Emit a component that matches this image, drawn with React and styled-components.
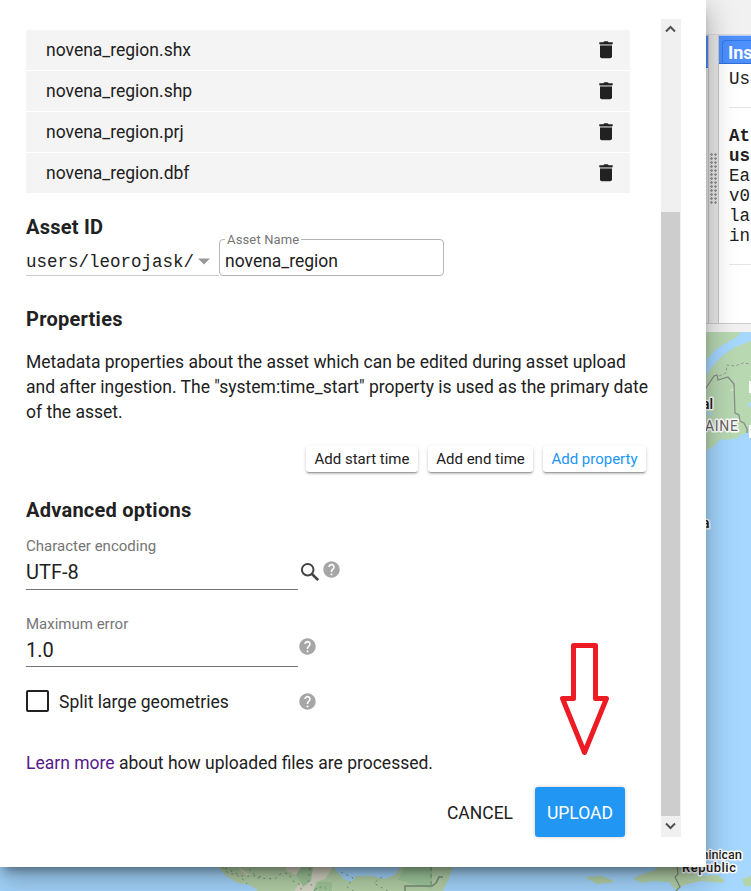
import React from "react";
import styled, { createGlobalStyle } from "styled-components";

const GlobalStyle = createGlobalStyle`
  * { box-sizing: border-box; }
  body { margin: 0; overflow: hidden; font-family: Roboto, sans-serif; color: #212121; }
`;

const Page = styled.div`
  position: relative;
  width: 751px;
  height: 891px;
  overflow: hidden;
  background: #f1f1f1;
`;

/* Workspace behind the dialog */
const Workspace = styled.div`
  display: flex;
  flex-direction: column;
  height: 100%;
`;
const TopBar = styled.div`
  height: 35px;
  flex: none;
  border-bottom: 1px solid #dcdcdc;
`;
const Panels = styled.div`
  display: flex;
  height: 289px;
  flex: none;
  border-bottom: 1px solid #ccc;
`;
const CodePanel = styled.div`
  width: 709px;
  flex: none;
  background: #ececec;
  border-right: 1px solid #c8c8c8;
`;
const PanelHeader = styled.div`
  height: ${(p) => p.$height}px;
  padding: 4px 0 0 3px;
  background: #4d90fe;
  border-top: 1px solid #b9cdf0;
  border-bottom: 1px solid #2f6fd8;
`;
const Tab = styled.div`
  height: 24px;
  width: 60px;
  padding-left: 5px;
  border: 1px solid #3079ed;
  border-bottom: 0;
  border-radius: 4px 0 0 0;
  color: #fff;
  font-size: 18px;
  font-weight: 700;
  line-height: 24px;
`;
const Splitter = styled.div`
  display: flex;
  align-items: center;
  justify-content: center;
  width: 9px;
  flex: none;
  background: #e9e9e9;
`;
const Grip = styled.div`
  width: 7px;
  height: 52px;
  background: radial-gradient(circle at 1.5px 1.5px, #999 1.1px, transparent 1.5px) 0 0 / 4px 4px;
`;
const Inspector = styled.div`
  flex: 1;
  min-width: 0;
  overflow: hidden;
  background: #fff;
  border-left: 1px solid #c8c8c8;
`;
const ConsoleEntry = styled.div`
  width: 120px;
  height: ${(p) => p.$height}px;
  margin-left: 10px;
  padding-top: ${(p) => p.$top}px;
  border-bottom: 1px solid #e5e5e5;
  font: 17.5px/20px "Liberation Mono", monospace;
`;
const MapPane = styled.div`
  flex: 1;
  margin-top: 8px;
  svg { display: block; }
`;

/* Dialog */
const Dialog = styled.div`
  position: absolute;
  left: 0;
  top: 0;
  display: flex;
  width: 706px;
  height: 867px;
  background: #fff;
  box-shadow: 0 16px 24px 2px rgba(0, 0, 0, 0.14), 0 6px 30px 5px rgba(0, 0, 0, 0.12),
    0 8px 10px -5px rgba(0, 0, 0, 0.4);
`;
const Body = styled.div`
  display: flex;
  flex-direction: column;
  width: 661px;
  padding: 30px 0 0 26px;
`;
const FileList = styled.div`
  display: grid;
  grid-auto-rows: 40px;
  gap: 1px;
  width: 604px;
`;
const FileRow = styled.div`
  display: flex;
  align-items: center;
  justify-content: space-between;
  padding: 0 12px 1px 20px;
  background: #f4f4f4;
  font-size: 17.5px;
`;
const Heading = styled.h3`
  margin: ${(p) => p.$top}px 0 0;
  font-size: 20px;
  font-weight: 700;
  line-height: 24px;
  letter-spacing: 0.25px;
`;
const AssetRow = styled.div`
  display: flex;
  height: 37px;
`;
const OwnerSelect = styled.div`
  display: flex;
  align-items: center;
  gap: 3px;
  width: 193px;
  padding-top: 9px;
  border-bottom: 1px solid #ccc;
  font: 17.5px/22px "Liberation Mono", monospace;
`;
const AssetField = styled.fieldset`
  width: 225px;
  height: 44px;
  margin: -7px 0 0;
  padding: 5px 5px 0;
  border: 1px solid #b5b5b5;
  border-radius: 4px;
  font-size: 17.5px;
  line-height: 21px;
`;
const Legend = styled.legend`
  height: 14px;
  padding: 0 2px;
  color: #757575;
  font-size: 13px;
  line-height: 15px;
  letter-spacing: 0.15px;
`;
const Copy = styled.p`
  margin: ${(p) => p.$top}px 0 0;
  font-size: 17.5px;
  line-height: 25px;
  white-space: nowrap;
`;
const LearnLink = styled.a`
  color: #551a8b;
`;
const PropertyActions = styled.div`
  display: flex;
  justify-content: flex-end;
  gap: 10px;
  margin: 21px 15px 0 0;
`;
const SmallButton = styled.button`
  width: ${(p) => p.$width}px;
  height: 26px;
  padding: 0;
  border: 0;
  border-radius: 3px;
  background: #fff;
  color: ${(p) => (p.$accent ? "#2196f3" : "#212121")};
  font: 15px/26px Roboto, sans-serif;
  white-space: nowrap;
  box-shadow: 0 2px 2px rgba(0, 0, 0, 0.16), 0 1px 4px rgba(0, 0, 0, 0.12),
    0 2px 1px -1px rgba(0, 0, 0, 0.22);
`;
const FieldRow = styled.div`
  display: flex;
  margin-top: ${(p) => p.$top}px;
`;
const TextField = styled.div`
  width: 272px;
  height: ${(p) => p.$height}px;
  border-bottom: 1px solid #737373;
`;
const FieldLabel = styled.div`
  color: #757575;
  font-size: 15px;
  line-height: 18px;
`;
const FieldValue = styled.div`
  padding-top: 5px;
  font-size: 20px;
  line-height: 25px;
`;
const FieldIcons = styled.div`
  display: flex;
  align-items: flex-start;
  gap: 3px;
  padding: ${(p) => p.$top}px 0 0 ${(p) => p.$left}px;
`;
const CheckRow = styled.div`
  display: flex;
  align-items: center;
  height: 23px;
  margin-top: 23px;
  font-size: 17.5px;
`;
const CheckBox = styled.span`
  width: 23px;
  height: 22px;
  margin: -1px 10px 0 0;
  border: 2px solid #212121;
  border-radius: 2px;
`;
const CheckLabel = styled.span`
  width: 240px;
`;
const Footer = styled.div`
  display: flex;
  justify-content: flex-end;
  gap: 10px;
  margin: 11px 36px 0 0;
`;
const DialogButton = styled.button`
  width: 90px;
  height: 50px;
  padding: 2px 0 0;
  border: 0;
  border-radius: 3px;
  background: ${(p) => (p.$primary ? "#2196f3" : "transparent")};
  color: ${(p) => (p.$primary ? "#fff" : "#212121")};
  font: 17.5px/48px Roboto, sans-serif;
  box-shadow: ${(p) => (p.$primary ? "0 0 4px rgba(0,0,0,0.2)" : "none")};
`;
const ScrollTrack = styled.div`
  display: flex;
  flex-direction: column;
  align-items: flex-start;
  width: 20px;
  height: 818px;
  margin-top: 19px;
  background: #f0f0f0;
`;
const ScrollThumb = styled.div`
  width: 19px;
  height: 604px;
  margin-top: auto;
  background: #cdcdcd;
`;
const ScrollButton = styled.div`
  display: flex;
  align-items: center;
  justify-content: center;
  width: 19px;
  height: 21px;
  padding-bottom: 1px;
`;
const Pointer = styled.svg`
  position: absolute;
  left: 560px;
  top: 643px;
`;

const Trash = () => (
  <svg width="24" height="24" viewBox="0 0 24 24">
    <path d="M6 7.5h12v10.7q0 2-2 2H8q-2 0-2-2z" fill="#212121" />
    <path d="M5.3 4.2h4l1-1h3.4l1 1h4v2H5.3z" fill="#212121" />
    <path d="M6 6.3h12v1.4H6z" fill="#777" />
  </svg>
);
const Help = () => (
  <svg width="18" height="18" viewBox="1.6 1.6 22 22">
    <path
      fill="#a6a6a6"
      d="M12 2C6.48 2 2 6.48 2 12s4.48 10 10 10 10-4.48 10-10S17.52 2 12 2zm1 17h-2v-2h2v2zm2.07-7.75l-.9.92C13.45 12.9 13 13.5 13 15h-2v-.5c0-1.1.45-2.1 1.17-2.83l1.24-1.26c.37-.36.59-.86.59-1.41 0-1.1-.9-2-2-2s-2 .9-2 2H8c0-2.21 1.79-4 4-4s4 1.79 4 4c0 .88-.36 1.68-.93 2.25z"
    />
  </svg>
);
const Search = () => (
  <svg width="20" height="22" viewBox="0 -1 20 22" fill="none" stroke="#444">
    <circle cx="7.7" cy="7.7" r="5.8" strokeWidth="2" />
    <path d="M12 12l6.2 6.2" strokeWidth="2.6" />
  </svg>
);
const Chevron = ({ d }) => (
  <svg width="11" height="8" viewBox="0 0 11 8">
    <path d={d} fill="none" stroke="#505050" strokeWidth="2" />
  </svg>
);

const MapLabel = styled.text`
  font: ${(p) => p.$weight || 500} ${(p) => p.$size || 12}px Roboto, sans-serif;
  fill: ${(p) => p.$fill || "#1d1d1d"};
  stroke: #fff;
  stroke-width: 3px;
  stroke-linejoin: round;
  paint-order: stroke;
`;

const WorldMap = () => (
  <svg width="751" height="559" viewBox="0 332 751 559">
    <rect y="332" width="751" height="559" fill="#a5d7ff" />
    <path fill="#b8d8b2" d="M690 332h61v98l-6 4-5 1-3 4-4-1-3 3-3-2-4 1-3-1-5 7-5 2-4 3-12 2z" />
    <path fill="#a5d7ff" d="M741 332h10v9l-16 6-13 9-10 11-6 8v-15l9-10 13-8 9-5zM708 411l4 3-2 2-3-2zM748 404l3-2v4l-3 1z" />
    <path fill="#d9e3bd" d="M730 391l3-4 1 4z" />
    <path fill="none" stroke="#888" strokeWidth="1.2" d="M704 391l6-9 4-6 3-1 1 5 10-3 6 7 1 29 4 2 1 6 4 2 3 6v4" />
    <path fill="none" stroke="#999" strokeDasharray="3 2" d="M719 376l7-3 1-8 8 1 8-3 8 1" />
    <MapLabel x="702" y="409" $size="14">al</MapLabel>
    <MapLabel x="692" y="431" $size="14" $weight="400" $fill="#666" textLength="46">MAINE</MapLabel>
    <MapLabel x="702" y="528" $size="14">a</MapLabel>
    <path fill="none" stroke="#fff" strokeWidth="2" d="M751 382h-1v10h1m0 34h-1v11h1" />

    <path fill="#b5d3a9" d="M212 860h118l6 11 8 8 8 3 4-6 16 0 12 3 11-4 10-15h50l-6 18-6 13H258l-8-6-12-2-12-7z" />
    <path fill="#a3cd9f" d="M405 865h27v24l-34-9z" />
    <path fill="#d8d8c8" d="M285 867h48l-8 12-9 3-3 9h-19l9-13-16-7zM240 868l10 7-3 1-8-7z" />
    <path fill="#a3c99c" d="M301 867h12l-2 14-8 6-7-12zM318 882h14v9h-18z" />
    <path fill="none" stroke="#789178" strokeDasharray="2 4" d="M222 867l6 6 9 2 8 6 2 3m2-15l9 9 17 1 5-5 8-1 5 8 8 4v8m9-25l-2 15 7 4 5 5m-95-24l17 8 14 0 5 1m53 13l9-4 10 8m8-22l12 6-6 9 15 9m20-19l-8 6 24 14" />
    <path fill="none" stroke="#769078" strokeDasharray="4 3" d="M431 867v20" />
    <path fill="none" stroke="#7f8c7b" strokeWidth="1.5" d="M405 891v-5h27l4-3 3-6h4" />
    <path fill="#b5d3a9" d="M585 877l17-1 12 5-4 2-13 1zM640 875l13-4 7-6h23l6 7 12 4 16-1 8 5-2 3-22-2-17 4-8 5-7-8-17-1-9 2-10-4z" />
    <path fill="#b5d3a9" d="M742 879l9-3v10h-6z" />
    <path fill="none" stroke="#7f8c7b" strokeWidth="1.2" d="M677 866l1 8-3 3 5 10-4 4" />
    <MapLabel x="682" y="858.5" $size="13" textLength="60">Dominican</MapLabel>
    <MapLabel x="682" y="871.5" $size="13" textLength="54">Republic</MapLabel>
  </svg>
);

const files = ["novena_region.shx", "novena_region.shp", "novena_region.prj", "novena_region.dbf"];

export default function App() {
  return (
    <Page>
      <GlobalStyle />
      <Workspace>
        <TopBar />
        <Panels>
          <CodePanel>
            <PanelHeader $height={33} />
          </CodePanel>
          <Splitter>
            <Grip />
          </Splitter>
          <Inspector>
            <PanelHeader $height={29}>
              <Tab>Ins</Tab>
            </PanelHeader>
            <ConsoleEntry $height={44} $top={5}>Us</ConsoleEntry>
            <ConsoleEntry $height={157} $top={18}>
              <b>At<br />us</b><br />Ea<br />v0<br />la<br />in
            </ConsoleEntry>
          </Inspector>
        </Panels>
        <MapPane>
          <WorldMap />
        </MapPane>
      </Workspace>

      <Dialog>
        <Body>
          <FileList>
            {files.map((name) => (
              <FileRow key={name}>
                {name}
                <Trash />
              </FileRow>
            ))}
          </FileList>
          <Heading $top={22}>Asset ID</Heading>
          <AssetRow>
            <OwnerSelect>
              users/leorojask/
              <svg width="14" height="7" viewBox="0 0 14 7">
                <path d="M1 0.5h12L7 6.5z" fill="#999" />
              </svg>
            </OwnerSelect>
            <AssetField>
              <Legend>Asset Name</Legend>
              novena_region
            </AssetField>
          </AssetRow>
          <Heading $top={31}>Properties</Heading>
          <Copy $top={19}>
            Metadata properties about the asset which can be edited during asset upload
            <br />
            and after ingestion. The "system:time_start" property is used as the primary date
            <br />
            of the asset.
          </Copy>
          <PropertyActions>
            <SmallButton $width={112}>Add start time</SmallButton>
            <SmallButton $width={105}>Add end time</SmallButton>
            <SmallButton $width={103} $accent>Add property</SmallButton>
          </PropertyActions>
          <Heading $top={26}>Advanced options</Heading>
          <FieldRow $top={15}>
            <TextField $height={53}>
              <FieldLabel>Character encoding</FieldLabel>
              <FieldValue>UTF-8</FieldValue>
            </TextField>
            <FieldIcons $top={24} $left={2}>
              <Search />
              <Help />
            </FieldIcons>
          </FieldRow>
          <FieldRow $top={25}>
            <TextField $height={52}>
              <FieldLabel>Maximum error</FieldLabel>
              <FieldValue>1.0</FieldValue>
            </TextField>
            <FieldIcons $top={23} $left={1}>
              <Help />
            </FieldIcons>
          </FieldRow>
          <CheckRow>
            <CheckBox />
            <CheckLabel>Split large geometries</CheckLabel>
            <Help />
          </CheckRow>
          <Copy $top={38}>
            <LearnLink>Learn more</LearnLink> about how uploaded files are processed.
          </Copy>
          <Footer>
            <DialogButton>CANCEL</DialogButton>
            <DialogButton $primary>UPLOAD</DialogButton>
          </Footer>
        </Body>
        <ScrollTrack>
          <ScrollButton>
            <Chevron d="M1 6.5L5.5 2 10 6.5" />
          </ScrollButton>
          <ScrollThumb />
          <ScrollButton>
            <Chevron d="M1 1.5L5.5 6 10 1.5" />
          </ScrollButton>
        </ScrollTrack>
      </Dialog>
      <Pointer width="50" height="113" viewBox="0 0 50 113">
        <path
          d="M13.5 2.5h22v53H46.5L24.5 109.5 2.5 55.5h11z"
          fill="none"
          stroke="#ed1c24"
          strokeWidth="5"
          strokeLinejoin="round"
        />
      </Pointer>
    </Page>
  );
}
